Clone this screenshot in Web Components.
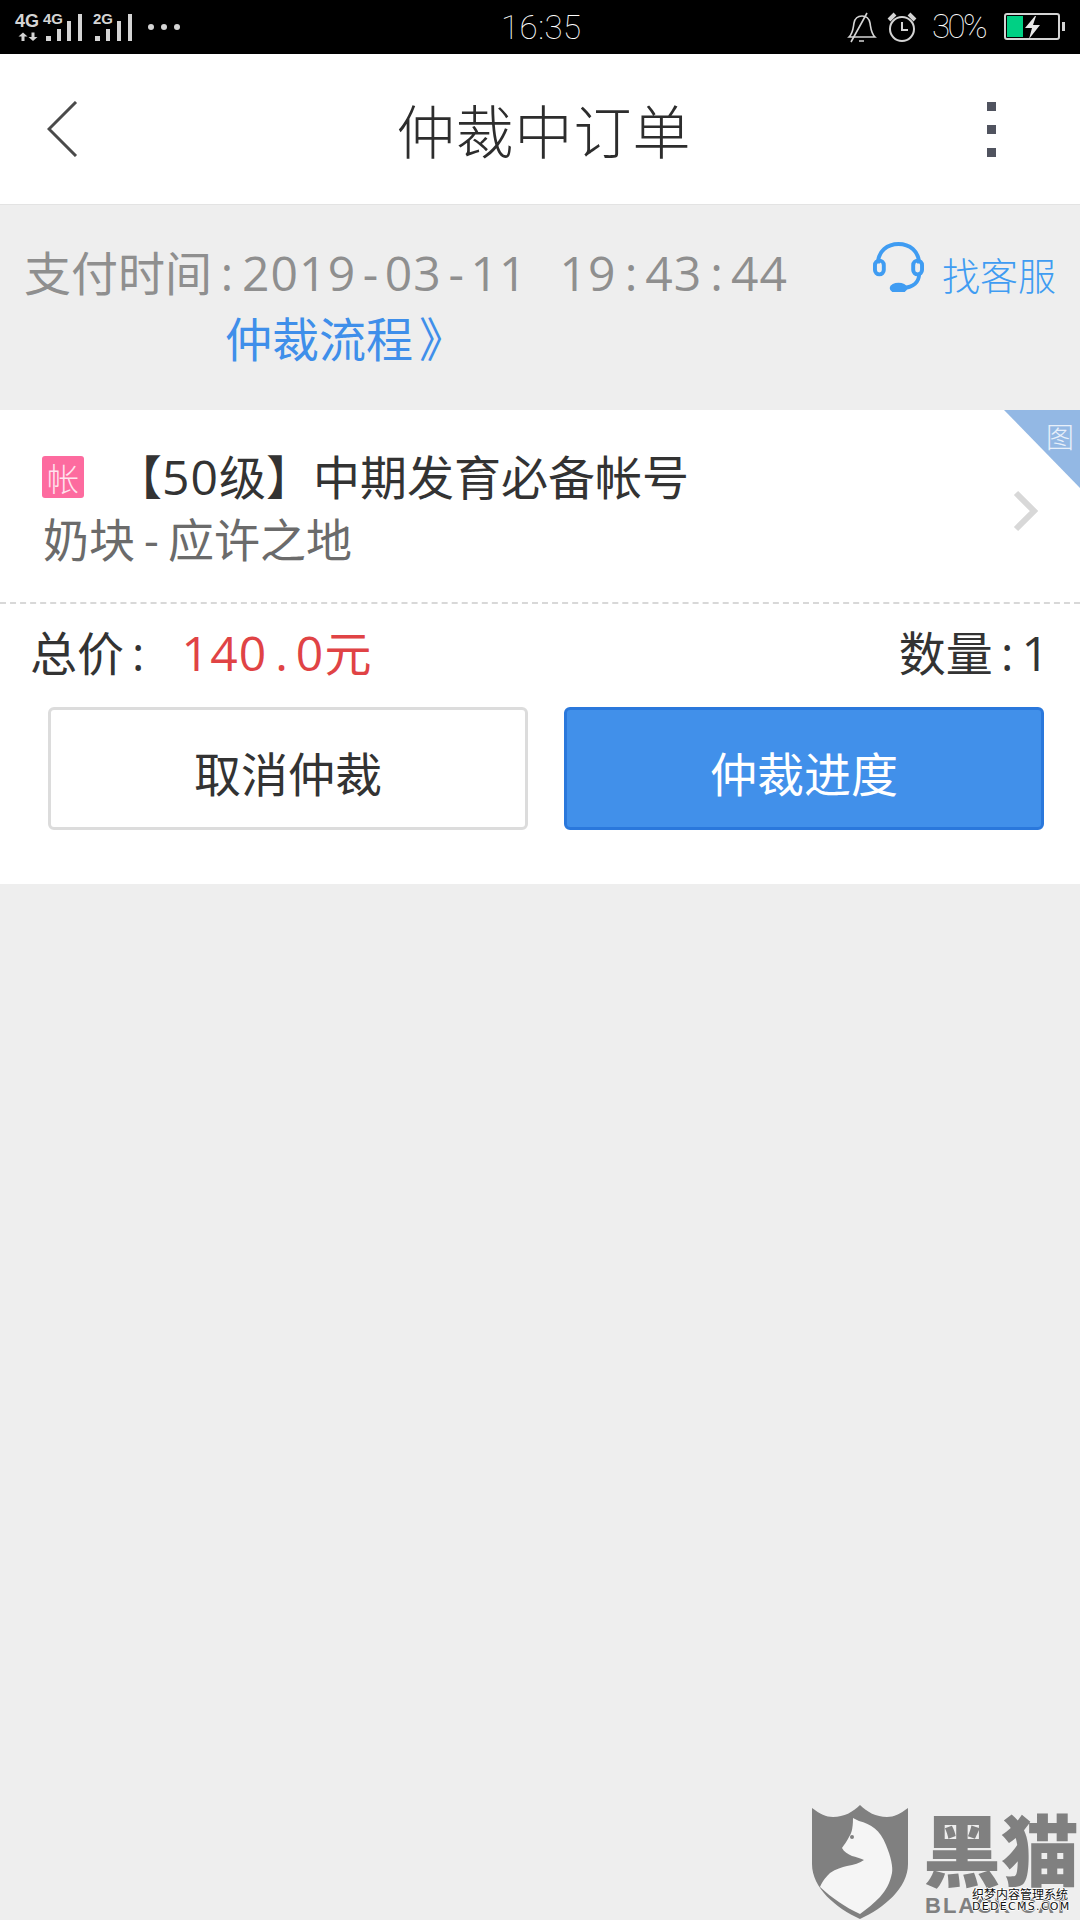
<!DOCTYPE html>
<html lang="zh-CN">
<head>
<meta charset="utf-8">
<title>仲裁中订单</title>
<style>
	html, body {
		margin: 0;
		padding: 0;
		background: #eee;
	}
	body {
		width: 1080px;
		height: 1920px;
		overflow: hidden;
		font-family: "Open Sans", "Noto Sans CJK SC", sans-serif;
	}
</style>
</head>
<body>
<order-page>
	<status-bar></status-bar>
	<nav-bar title="仲裁中订单"></nav-bar>
	<pay-info></pay-info>
	<order-card></order-card>
</order-page>
<brand-mark></brand-mark>

<script>
// digits and separators sit on an even 28px pitch in the reference
const pitched = (str) => str.replace(/[^0-9]/g, (c) => `<span class="sep">${c}</span>`);

const textStyles = /*css*/`
	.num { font-size: 48px; letter-spacing: 1.100px; }
	.sep {
		display: inline-block;
		width: 28.600px;
		text-align: center;
		letter-spacing: 0;
	}
`;

class OrderPage extends HTMLElement {
	constructor() {
		super();
		this.attachShadow({ mode: 'open' }).innerHTML = /*html*/`
			<style>
				:host {
					display: flex;
					flex-direction: column;
					width: 1080px;
				}
			</style>
			<slot></slot>
		`;
	}
}

class StatusBar extends HTMLElement {
	constructor() {
		super();
		this.attachShadow({ mode: 'open' }).innerHTML = /*html*/`
			<style>
				:host {
					display: flex;
					align-items: center;
					box-sizing: border-box;
					height: 54px;
					background: #000;
					color: #fff;
				}
				svg { display: block; flex: none; }
				.time {
					position: absolute;
					left: 501px;
					top: 9px;
					font: 100 33px/38px "Roboto", sans-serif;
					letter-spacing: 0.500px;
				}
				.right {
					margin-left: auto;
					display: flex;
					align-items: center;
					padding-right: 14px;
				}
				.pct {
					font: 100 33px/38px "Roboto", sans-serif;
					margin: 0 19px 0 15px;
					letter-spacing: -2.600px;
				}
			</style>
			<svg width="190" height="54" viewBox="0 0 190 54" fill="#d4d4d4">
				<text x="15" y="27" font-family="Liberation Sans" font-weight="700" font-size="18">4G</text>
				<text x="43" y="24" font-family="Liberation Sans" font-weight="700" font-size="15">4G</text>
				<text x="93" y="24" font-family="Liberation Sans" font-weight="700" font-size="15">2G</text>
				<path d="M23 32.500l-4.500 4h3V41h3v-4.500h3zM33 41l-4.500-4h3v-4.500h3V37h3z"/>
				<rect x="46" y="36" width="5" height="5"/>
				<rect x="57" y="29" width="4" height="12"/>
				<rect x="67" y="21" width="4" height="20"/>
				<rect x="78" y="14" width="4" height="27"/>
				<rect x="95" y="36" width="5" height="5"/>
				<rect x="106" y="29" width="4" height="12"/>
				<rect x="117" y="21" width="4" height="20"/>
				<rect x="128" y="14" width="4" height="27"/>
				<circle cx="151" cy="27" r="3"/>
				<circle cx="164" cy="27" r="3"/>
				<circle cx="177" cy="27" r="3"/>
			</svg>
			<span class="time">16:35</span>
			<div class="right">
				<svg width="30" height="32" viewBox="0 0 30 32" fill="none" stroke="#d4d4d4" stroke-width="1.600">
					<path d="M2 26c4-4 4-8 5-14 1-5 4-7 8-7s7 2 8 7c1 6 1 10 5 14z"/>
					<path d="M4 31 20 2M12 30h5"/>
				</svg>
				<svg width="30" height="30" viewBox="0 0 30 30" fill="none" stroke="#d4d4d4" stroke-width="2" style="margin-left:10px">
					<circle cx="15" cy="17" r="12"/>
					<path d="M15 10v8h6"/>
					<path d="M2 8 8 2M22 2l6 6" stroke-width="4"/>
				</svg>
				<span class="pct">30%</span>
				<svg width="62" height="28" viewBox="0 0 62 28" fill="none">
					<rect x="1" y="1" width="54" height="25" rx="2" stroke="#d4d4d4" stroke-width="2"/>
					<rect x="3" y="3" width="16" height="21" fill="#00d084"/>
					<path d="M31 3 21 15h7l-3 11 11-14h-7l3-9z" fill="#e8e8e8"/>
					<rect x="58" y="9" width="3" height="9" fill="#d4d4d4"/>
				</svg>
			</div>
		`;
	}
}

class NavBar extends HTMLElement {
	constructor() {
		super();
		const title = this.getAttribute('title') || '';
		this.attachShadow({ mode: 'open' }).innerHTML = /*html*/`
			<style>
				:host {
					display: grid;
					grid-template-columns: 150px 1fr 150px;
					align-items: center;
					box-sizing: border-box;
					height: 151px;
					background: #fff;
					border-bottom: 1px solid #e3e3e3;
				}
				.back { padding-left: 47px; display: flex; }
				h1 {
					margin: 0;
					padding-left: 8px;
					text-align: center;
					font: 300 58px/1 "Noto Sans CJK SC", sans-serif;
					letter-spacing: 1px;
					color: #2d2d2d;
				}
				.more {
					display: flex;
					flex-direction: column;
					gap: 14px;
					margin-left: 57px;
				}
				.more i {
					display: block;
					width: 9px;
					height: 9px;
					background: #50535f;
				}
			</style>
			<div class="back">
				<svg width="31" height="56" viewBox="0 0 31 56" fill="none" stroke="#4a4a4a" stroke-width="3">
					<path d="M29 1 2 28l27 27"/>
				</svg>
			</div>
			<h1>${title}</h1>
			<div class="more"><i></i><i></i><i></i></div>
		`;
	}
}

class PayInfo extends HTMLElement {
	constructor() {
		super();
		this.attachShadow({ mode: 'open' }).innerHTML = /*html*/`
			<style>
				:host {
					display: block;
					position: relative;
					box-sizing: border-box;
					height: 205px;
					padding: 35px 0 0 24px;
					background: #eee;
					font: 400 47px/66px "Open Sans", "Noto Sans CJK SC", sans-serif;
					color: #8f8f8f;
				}
				${textStyles}
				.line { white-space: nowrap; }
				.lead { width: 30px; }
				.clock { margin-left: 32px; }
				.flow {
					display: block;
					margin-left: 201px;
					color: #3f8fea;
				}
				.flow span { margin-left: 6px; }
				.service {
					position: absolute;
					left: 873px;
					top: 37px;
					display: flex;
					align-items: flex-end;
					gap: 18px;
					color: #3f9cf2;
					font: 300 38px/44px "Noto Sans CJK SC", sans-serif;
				}
				.service span { margin-bottom: -4px; }
			</style>
			<div class="line">支付时间<span class="sep lead">:</span><span class="num">${pitched('2019-03-11')}</span><span class="num clock">${pitched('19:43:44')}</span></div>
			<div class="flow">仲裁流程<span>》</span></div>
			<div class="service">
				<svg width="51" height="50" viewBox="0 0 52 51" fill="none" stroke="#3f9cf2" stroke-width="4">
					<path d="M5 22C5 9 15 2 26 2s21 7 21 20"/>
					<rect x="2" y="19" width="9" height="14" rx="4.500"/>
					<rect x="41" y="19" width="9" height="14" rx="4.500"/>
					<path d="M47 33c0 8-6 13-16 14"/>
					<ellipse cx="26" cy="47" rx="7" ry="3.500" fill="#3f9cf2"/>
				</svg>
				<span>找客服</span>
			</div>
		`;
	}
}

class OrderCard extends HTMLElement {
	constructor() {
		super();
		this.attachShadow({ mode: 'open' }).innerHTML = /*html*/`
			<style>
				:host {
					display: block;
					position: relative;
					box-sizing: border-box;
					height: 474px;
					background: #fff;
					font: 400 47px/62px "Open Sans", "Noto Sans CJK SC", sans-serif;
					color: #333;
				}
				${textStyles}
				.goods {
					box-sizing: border-box;
					height: 194px;
					padding: 36px 0 0 42px;
					border-bottom: 2px dashed #d8d8d8;
				}
				.title { display: flex; align-items: center; height: 62px; }
				.tag {
					flex: none;
					width: 42px;
					height: 42px;
					border-radius: 3px;
					background: #fd6b9f;
					color: #ffe4ee;
					font: 300 32px/42px "Noto Sans CJK SC", sans-serif;
					text-align: center;
					margin-right: 31px;
				}
				.sub { margin-left: 1px; color: #6b6b6b; font-size: 46px; }
				.sub .sep { width: 33px; }
				.corner {
					position: absolute;
					right: 0;
					top: 0;
					width: 76px;
					height: 78px;
					background: #93b8e4;
					clip-path: polygon(0 0, 100% 0, 100% 100%);
				}
				.corner span {
					position: absolute;
					right: 6px;
					top: 10px;
					color: #e8f0fa;
					font: 300 28px/32px "Noto Sans CJK SC", sans-serif;
				}
				.chevron { position: absolute; left: 1012px; top: 80px; }
				.total {
					display: flex;
					justify-content: space-between;
					padding: 18px 30px 0 30px;
				}
				.price { color: #e04345; margin-left: 29px; }
				.actions {
					display: grid;
					grid-template-columns: 480px 480px;
					gap: 36px;
					margin: 23px 0 0 48px;
				}
			</style>
			<div class="goods">
				<div class="title">
					<span class="tag">帐</span>
					<span>【<span class="num">50</span>级】中期发育必备帐号</span>
				</div>
				<div class="sub">奶块${pitched('-')}应许之地</div>
			</div>
			<div class="corner"><span>图</span></div>
			<svg class="chevron" width="28" height="42" viewBox="0 0 28 42" fill="none" stroke="#d8d8d8" stroke-width="6">
				<path d="M4 3 22 21 4 39"/>
			</svg>
			<div class="total">
				<div>总价${pitched(':')}<span class="price"><span class="num">${pitched('140.0')}</span>元</span></div>
				<div>数量${pitched(':')}<span class="num">1</span></div>
			</div>
			<div class="actions">
				<order-button>取消仲裁</order-button>
				<order-button primary>仲裁进度</order-button>
			</div>
		`;
	}
}

class OrderButton extends HTMLElement {
	constructor() {
		super();
		this.attachShadow({ mode: 'open' }).innerHTML = /*html*/`
			<style>
				:host {
					display: flex;
					align-items: center;
					justify-content: center;
					box-sizing: border-box;
					height: 123px;
					padding-top: 6px;
					border: 3px solid #dcdcdc;
					border-radius: 6px;
					background: #fff;
					color: #333;
					font: 400 47px/1 "Noto Sans CJK SC", sans-serif;
				}
				:host([primary]) {
					background: #4190ea;
					border-color: #2a78dc;
					color: #fff;
				}
			</style>
			<slot></slot>
		`;
	}
}

class BrandMark extends HTMLElement {
	constructor() {
		super();
		this.attachShadow({ mode: 'open' }).innerHTML = /*html*/`
			<style>
				:host {
					display: block;
					position: absolute;
					left: 812px;
					top: 1805px;
					width: 268px;
					height: 115px;
					color: #808080;
				}
				svg { position: absolute; left: 0; top: 0; }
				.name {
					position: absolute;
					left: 111px;
					top: 3px;
					font: 900 78px/78px "Noto Sans CJK SC", sans-serif;
					white-space: nowrap;
				}
				.latin {
					position: absolute;
					left: 113px;
					top: 89px;
					font: 700 22px/24px "Liberation Sans", sans-serif;
					letter-spacing: 2px;
					white-space: nowrap;
				}
				.stamp {
					position: absolute;
					left: 160px;
					top: 82px;
					color: #111;
					text-shadow: -1px 0 #fff, 1px 0 #fff, 0 -1px #fff, 0 1px #fff;
					white-space: nowrap;
				}
				.stamp div:first-child { font: 400 12px/14px "Noto Sans CJK SC", sans-serif; }
				.stamp div:last-child { font: 400 11px/12px "DejaVu Sans", sans-serif; letter-spacing: 1.300px; }
			</style>
			<svg width="96" height="114" viewBox="0 0 96 114">
				<path d="M0 3C8 9 14 12 21 12 32 12 41 7 48 0c7 7 16 12 27 12 7 0 13-3 21-9v56c0 24-24 44-48 55C24 103 0 83 0 59z" fill="#808080"/>
				<path d="M41 13l6 3c12 3 21 9 27 24 5 12 7 22 6 28-2 10-6 17-12 24-6 6-13 12-20 17C33 102 20 93 8 82c3-7 7-11 10-14 6-4 12-6 17-7 7-1 13-3 17-6-4-2-8-3-12-4-4-2-8-4-10-8 2-3 5-7 7-11 2-3 4-7 4-19z" fill="#f5f5f5"/>
				<circle cx="40" cy="32" r="2" fill="#808080"/>
			</svg>
			<div class="name">黑猫</div>
			<div class="latin">BLACK CAT</div>
			<div class="stamp">
				<div>织梦内容管理系统</div>
				<div>DEDECMS.COM</div>
			</div>
		`;
	}
}

customElements.define('order-page', OrderPage);
customElements.define('status-bar', StatusBar);
customElements.define('nav-bar', NavBar);
customElements.define('pay-info', PayInfo);
customElements.define('order-card', OrderCard);
customElements.define('order-button', OrderButton);
customElements.define('brand-mark', BrandMark);
</script>
</body>
</html>
